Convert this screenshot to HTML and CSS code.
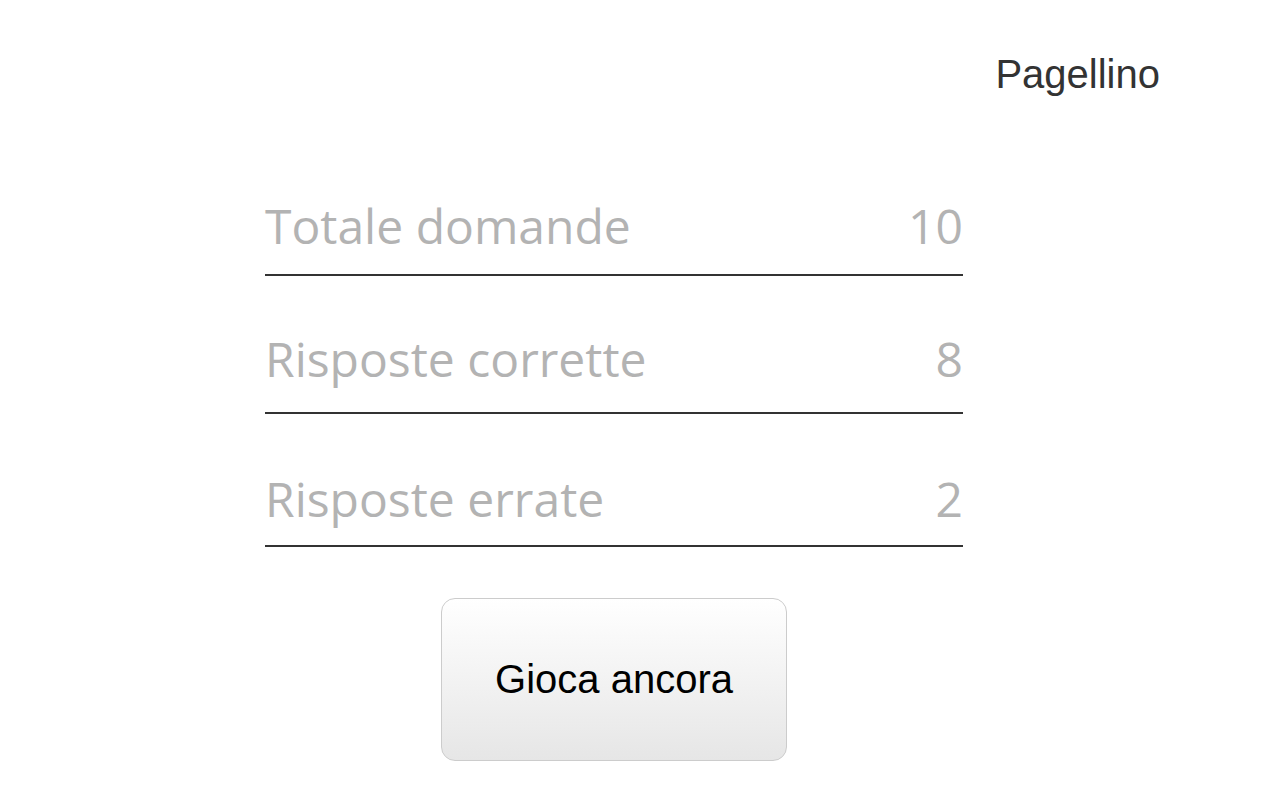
FILE: index.html
```html
<!DOCTYPE html>
<html lang="it">
<head>
<meta charset="utf-8">
<title>Pagellino</title>
<link rel="stylesheet" href="styles.css">
</head>
<body>
<header class="header">
  <h1 class="title">Pagellino</h1>
</header>
<main class="report">
  <div class="row row-total"><span class="label">Totale domande</span><span class="value">10</span></div>
  <div class="row row-correct"><span class="label">Risposte corrette</span><span class="value">8</span></div>
  <div class="row row-wrong"><span class="label">Risposte errate</span><span class="value">2</span></div>
  <button class="again" type="button">Gioca ancora</button>
</main>
</body>
</html>
```
FILE: styles.css
```css
html, body {
  margin: 0;
  background: #ffffff;
}
.header {
  display: flex;
  justify-content: flex-end;
  padding: 51px 120px 0 0;
}
.title {
  margin: 0;
  font-family: "Liberation Sans", Arial, sans-serif;
  font-weight: normal;
  font-size: 40px;
  line-height: 46px;
  color: #333333;
}
.report {
  width: 698px;
  margin: 96px 0 0 265px;
  display: flex;
  flex-direction: column;
}
.row {
  display: flex;
  justify-content: space-between;
  font-family: "Open Sans", sans-serif;
  font-size: 48px;
  line-height: 65px;
  color: #b3b3b3;
  border-bottom: 2px solid #333333;
  padding-bottom: 16px;
}
.row-correct {
  margin-top: 50px;
  padding-bottom: 21px;
}
.row-wrong {
  margin-top: 52px;
  padding-bottom: 14px;
}
.again {
  align-self: center;
  margin-top: 51px;
  width: 346px;
  height: 163px;
  box-sizing: border-box;
  border: 1px solid #cccccc;
  border-radius: 14px;
  background: linear-gradient(to bottom, #ffffff, #e6e6e6);
  font-family: "Liberation Sans", Arial, sans-serif;
  font-size: 40px;
  color: #000000;
  padding: 0;
  cursor: pointer;
}
```
